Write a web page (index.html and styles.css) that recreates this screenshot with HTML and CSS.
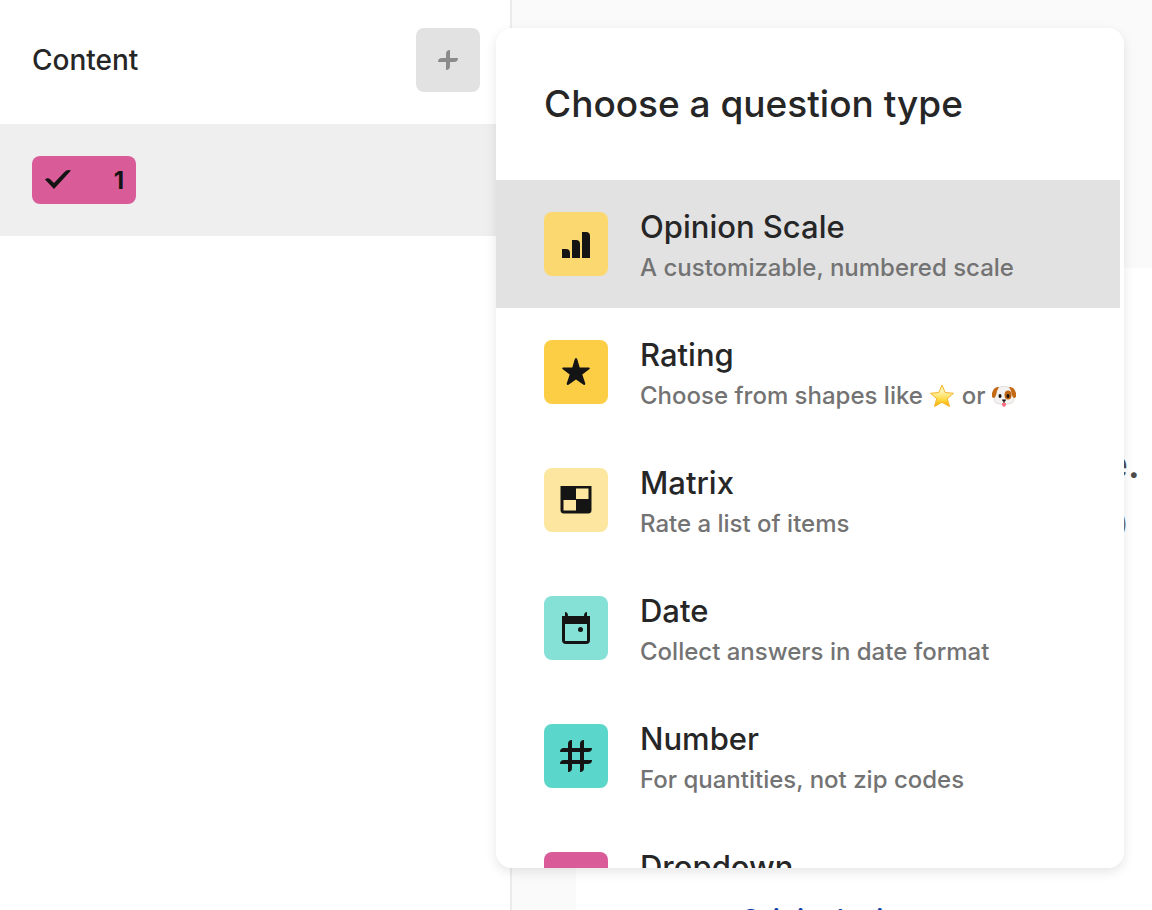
FILE: index.html
```html
<!DOCTYPE html>
<html lang="en">
<head>
  <meta charset="UTF-8">
  <meta name="viewport" content="width=device-width, initial-scale=1.0">
  <title>Choose a question type</title>
  <link rel="stylesheet" href="styles.css">
</head>
<body>

  <div class="builder">

    <!-- Sidebar -->
    <aside class="sidebar">
      <div class="sidebar-header">
        <h1>Content</h1>
        <div class="add-wrap">
          <button class="add-btn" type="button" aria-label="Add question">
            <svg width="24" height="24" viewBox="0 0 24 24" fill="#8b8b8b">
              <path d="M10 10V6Q10 2 14 2V10H22Q22 14 18 14H14V18Q14 22 10 22V14H2Q2 10 6 10Z"/>
            </svg>
          </button>

          <!-- Question type menu -->
          <div class="popover">
            <h2>Choose a question type</h2>
            <div class="type-list">
              <button class="type active" type="button">
                <span class="icon amber">
                  <svg width="32" height="32" viewBox="0 0 32 32" fill="#141414">
                    <path d="M2 21H6Q10 21 10 25V30H2ZM12 12H16Q20 12 20 16V30H12ZM22 4H26Q30 4 30 8V30H22Z"/>
                  </svg>
                </span>
                <span class="type-text">
                  <span class="name">Opinion Scale</span>
                  <span class="desc">A customizable, numbered scale</span>
                </span>
              </button>
              <button class="type" type="button">
                <span class="icon yellow">
                  <svg width="32" height="32" viewBox="0 0 32 32" fill="#141414">
                    <path d="M16 2Q17 2 17.500 4L19.700 11.500H29Q30.500 11.500 29.500 13L22.300 18.500L25.300 27.500Q25.500 29.600 23.500 28.700L16 23.500L8.500 28.700Q6.500 29.600 6.700 27.500L9.700 18.500L2.500 13Q1.500 11.500 3 11.500H12.300L14.500 4Q15 2 16 2Z"/>
                  </svg>
                </span>
                <span class="type-text">
                  <span class="name">Rating</span>
                  <span class="desc">Choose from shapes like
                    <svg class="emoji" width="26" height="24" viewBox="0 1 26 24" role="img" aria-label="star">
                      <defs>
                        <linearGradient id="gold" x1="0" y1="0" x2="0" y2="1">
                          <stop offset="0.300" stop-color="#fff3b0"/>
                          <stop offset="0.700" stop-color="#ffd83d"/>
                          <stop offset="1" stop-color="#f9a800"/>
                        </linearGradient>
                      </defs>
                      <path fill="url(#gold)" stroke="#f5b52a" stroke-width="1" stroke-linejoin="round" d="M13 2L16.200 9.500L24.500 10.300L18.300 15.700L20.500 23.500L13 19.300L5.500 23.500L7.700 15.700L1.500 10.300L9.800 9.500Z"/>
                    </svg>
                    or
                    <svg class="emoji" width="24" height="24" viewBox="1 1 24 24" role="img" aria-label="dog">
                      <path fill="#f4f2f0" stroke="#c9c5c2" stroke-width="0.500" d="M6 5Q13 1.500 20 5Q22 9 22 13L23 17Q22 21 17 21Q13 24 9 21Q4 21 3 17L4 13Q4 9 6 5Z"/>
                      <path fill="#c46a14" d="M8 4Q3 3 1 10Q0 15 3 15Q5 14 6 8ZM18 4Q23 3 25 10Q26 15 23 15Q21 14 20 8Z"/>
                      <ellipse cx="17" cy="12" rx="3.500" ry="4.500" fill="#bb6413"/>
                      <ellipse cx="9" cy="13" rx="1.500" ry="2" fill="#1d1512"/>
                      <ellipse cx="17" cy="13" rx="1.500" ry="2" fill="#1d1512"/>
                      <path fill="#ff6f86" d="M11 20H15V22Q13 26 11 22Z"/>
                      <path fill="#1d1512" d="M11 16.500H15Q15 18 13.500 18.800V20H12.500V18.800Q11 18 11 16.500Z"/>
                    </svg>
                  </span>
                </span>
              </button>
              <button class="type" type="button">
                <span class="icon cream">
                  <svg width="32" height="32" viewBox="0 0 32 32">
                    <path fill="#141414" fill-rule="evenodd" d="M0.500 2H31.500V26Q31.500 29.500 28 29.500H4Q0.500 29.500 0.500 26ZM16 4.500V15H28.500V4.500ZM3.500 16V26.500H16V16Z"/>
                  </svg>
                </span>
                <span class="type-text">
                  <span class="name">Matrix</span>
                  <span class="desc">Rate a list of items</span>
                </span>
              </button>
              <button class="type" type="button">
                <span class="icon mint">
                  <svg width="32" height="32" viewBox="0 0 32 32">
                    <path fill="#141414" fill-rule="evenodd" d="M5 0Q8 0 8 4H24Q24 0 27 0V4H30V28Q30 32 26 32H6Q2 32 2 28V4H5ZM5 12V29H27V12Z"/>
                    <circle cx="20.500" cy="17.500" r="2.500" fill="#141414"/>
                  </svg>
                </span>
                <span class="type-text">
                  <span class="name">Date</span>
                  <span class="desc">Collect answers in date format</span>
                </span>
              </button>
              <button class="type" type="button">
                <span class="icon teal">
                  <svg width="32" height="32" viewBox="0 0 32 32" fill="#141414">
                    <path fill-rule="evenodd" d="M8 8V4Q8 0 12 0V8H20V4Q20 0 24 0V8H32Q32 12 28 12H24V20H32Q32 24 28 24H24V28Q24 32 20 32V24H12V28Q12 32 8 32V24H0Q0 20 4 20H8V12H0Q0 8 4 8ZM12 12V20H20V12Z"/>
                  </svg>
                </span>
                <span class="type-text">
                  <span class="name">Number</span>
                  <span class="desc">For quantities, not zip codes</span>
                </span>
              </button>
              <button class="type" type="button">
                <span class="icon pink"></span>
                <span class="type-text">
                  <span class="name">Dropdown</span>
                </span>
              </button>
            </div>
          </div>
        </div>
      </div>

      <div class="question">
        <div class="badge">
          <svg width="28" height="24" viewBox="0 0 28 24" fill="#141414">
            <path d="M1 11.500Q3.500 9 6.500 11.500L10 15L20 4.500Q23 1 27 2.500L10 21Z"/>
          </svg>
          <span>1</span>
        </div>
      </div>
    </aside>

    <!-- Form preview -->
    <main class="preview">
      <div class="card">
        <p class="card-title">e.</p>
        <p class="card-note">)</p>
        <a class="card-link" href="#">Original mix</a>
      </div>
    </main>

  </div>

</body>
</html>
```
FILE: styles.css
```css
* {
  margin: 0;
  padding: 0;
  box-sizing: border-box;
}

body {
  font-family: Inter, "Liberation Sans", sans-serif;
  background-color: #fff;
  color: #262627;
  height: 100vh;
  overflow: hidden;
}

button {
  border: none;
  font-family: inherit;
  color: inherit;
  cursor: pointer;
}

.builder {
  display: flex;
  height: 100%;
}

.sidebar {
  width: 512px;
  flex-shrink: 0;
  border-right: 2px solid #ebebeb;
}

.sidebar-header {
  display: flex;
  justify-content: space-between;
  align-items: center;
  padding: 28px 30px 32px 32px;
}

h1 {
  font-size: 28px;
  line-height: 40px;
  font-weight: 500;
}

.add-wrap {
  position: relative;
}

.add-btn {
  display: flex;
  align-items: center;
  justify-content: center;
  width: 64px;
  height: 64px;
  border-radius: 8px;
  background-color: #e2e2e2;
}

.question {
  padding: 32px;
  background-color: #efefef;
}

.badge {
  display: flex;
  align-items: center;
  justify-content: space-between;
  width: 104px;
  height: 48px;
  padding: 0 12px;
  border-radius: 8px;
  background-color: #d95c98;
  color: #141414;
  font-size: 24px;
  font-weight: 700;
}

/* Question type menu */
.popover {
  position: absolute;
  top: 0;
  left: 80px;
  z-index: 2;
  width: 628px;
  height: calc(100vh - 70px);
  overflow: hidden;
  border-radius: 16px;
  background-color: #fff;
  box-shadow: 0 4px 12px rgba(0, 0, 0, 0.1);
}

h2 {
  padding: 52px 48px;
  font-size: 37px;
  line-height: 48px;
  font-weight: 500;
}

.type-list {
  padding-right: 4px;
}

.type {
  display: flex;
  align-items: center;
  gap: 32px;
  width: 100%;
  height: 128px;
  padding: 0 48px;
  background-color: #fff;
  text-align: left;
}

.type.active {
  background-color: #e2e2e2;
}

.icon {
  display: flex;
  align-items: center;
  justify-content: center;
  width: 64px;
  height: 64px;
  border-radius: 8px;
}

.amber {
  background-color: #fcd970;
}

.yellow {
  background-color: #fbce45;
}

.cream {
  background-color: #fde69f;
}

.mint {
  background-color: #85e1d6;
}

.teal {
  background-color: #5bd6ca;
}

.pink {
  background-color: #d95c98;
}

.type-text {
  display: flex;
  flex-direction: column;
  gap: 6px;
  height: 72px;
  white-space: nowrap;
}

.name {
  font-size: 31px;
  line-height: 38px;
  font-weight: 500;
}

.desc {
  font-size: 24px;
  line-height: 32px;
  font-weight: 500;
  color: #737373;
}

.emoji {
  vertical-align: -4px;
}

/* Form preview */
.preview {
  flex: 1;
  min-width: 0;
  padding: 268px 0 0 64px;
  background-color: #fafafa;
}

.card {
  height: 100%;
  padding: 172px 12px 0 0;
  background-color: #fff;
  text-align: right;
}

.card-title {
  font-size: 40px;
  line-height: 48px;
  font-weight: 500;
  color: #4c4c4c;
}

.card-note {
  padding: 16px 12px 0 0;
  font-size: 24px;
  line-height: 40px;
  color: #737373;
}

.card-link {
  display: block;
  padding: 356px 0 0 164px;
  font-size: 28px;
  line-height: 40px;
  font-weight: 500;
  color: #0b3fa8;
  text-align: left;
  text-decoration: none;
}
```
